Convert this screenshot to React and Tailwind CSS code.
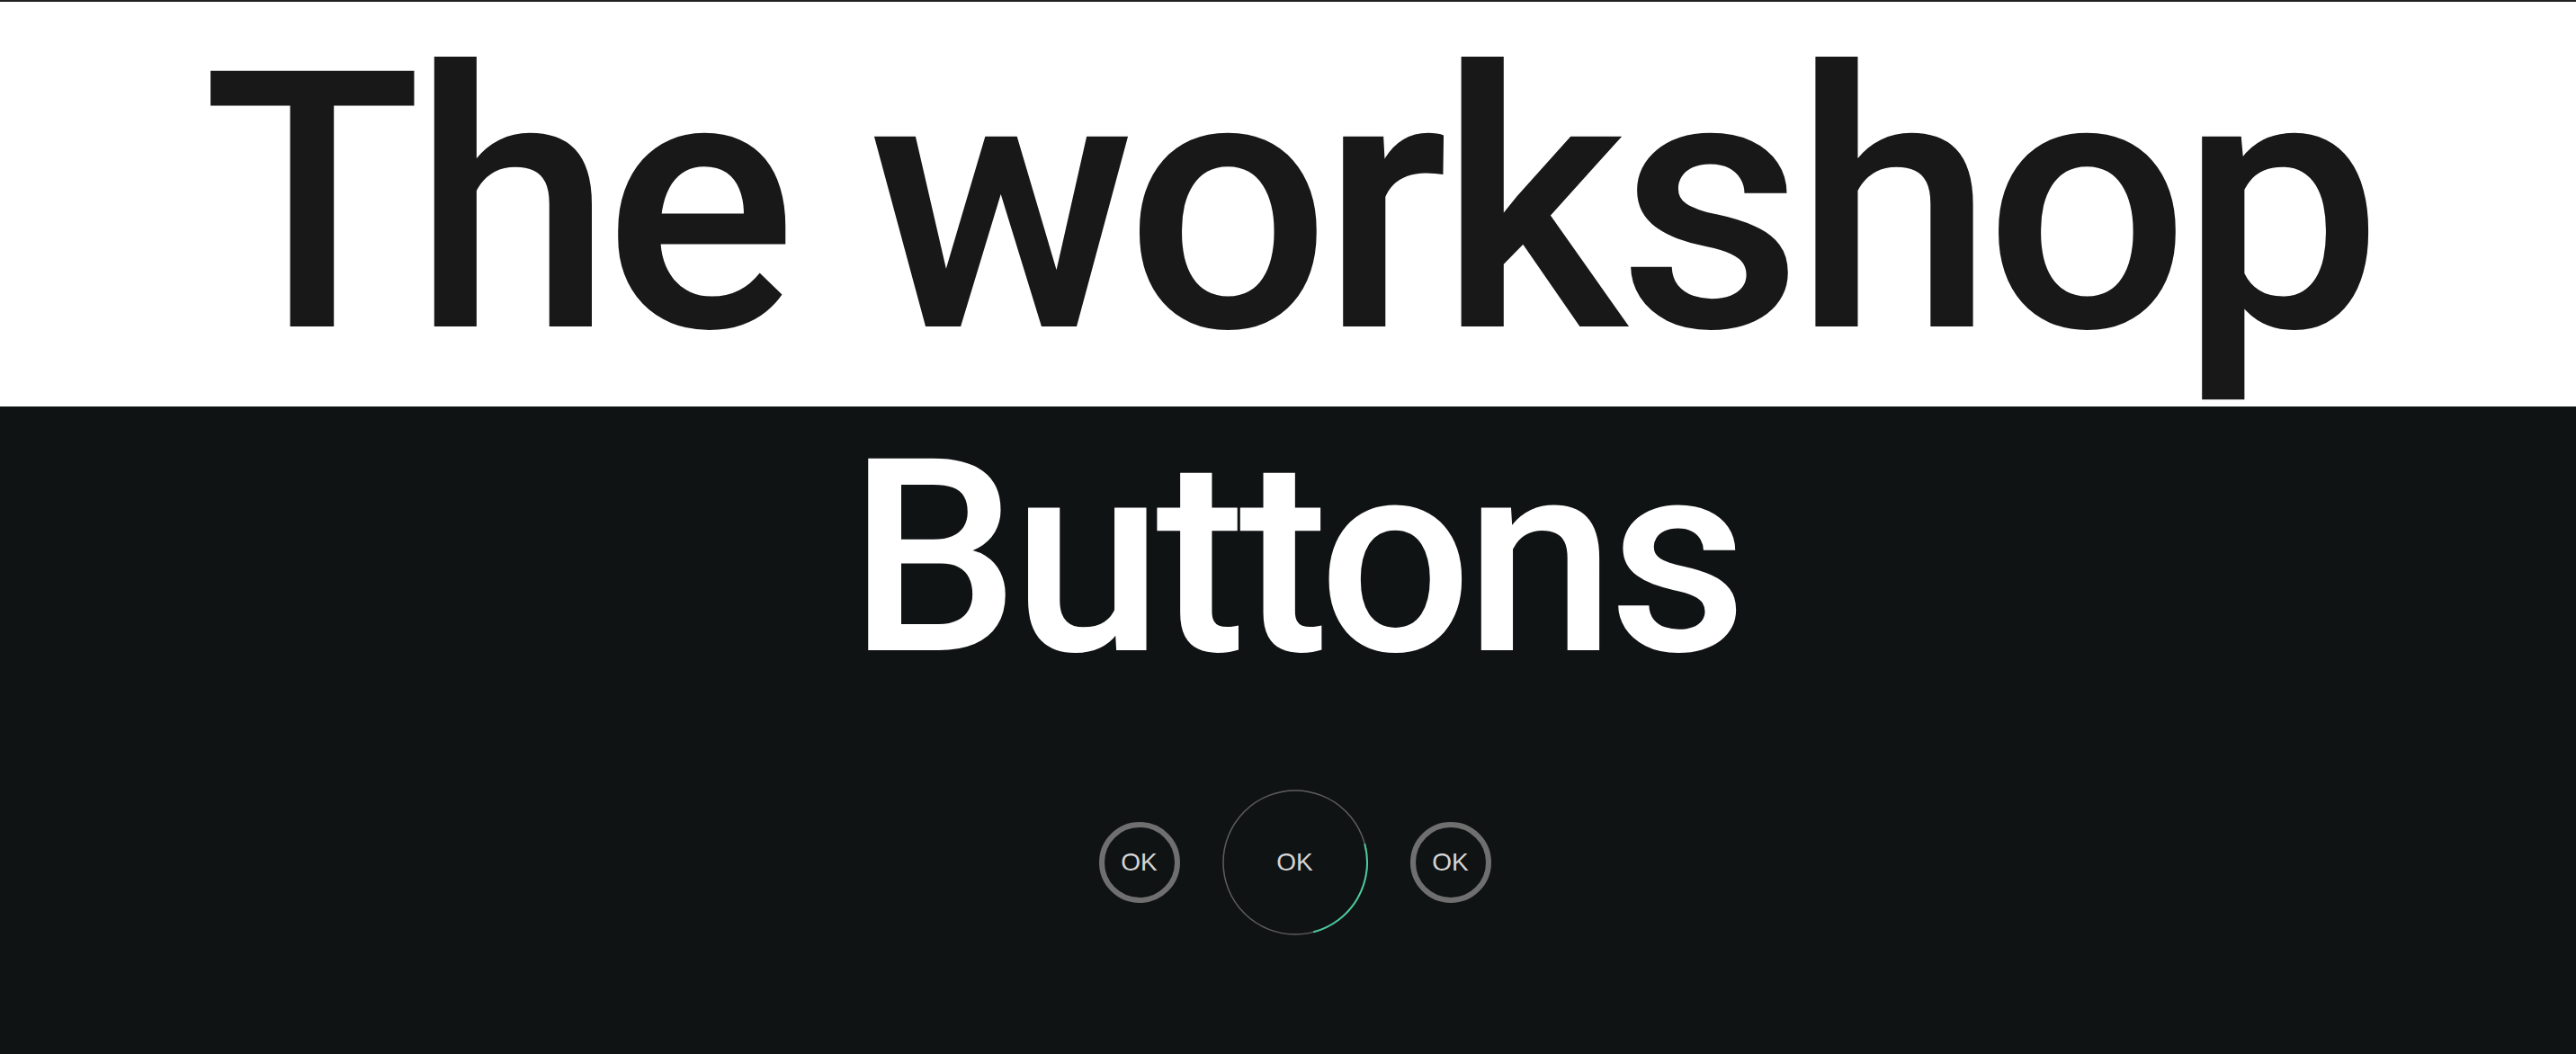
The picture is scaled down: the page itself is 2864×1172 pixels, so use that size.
export default function App() {
  const ok = 'text-[28px] leading-none text-[#d4d4d4] font-["Liberation_Sans",Arial,sans-serif]';
  return (
    <div className="min-h-[1172px] w-full flex flex-col bg-[#101314]">
      <header className="border-t-2 border-[#222222] bg-white pt-[1px] pb-[1px] flex justify-center">
        <h1 className="font-['Roboto',sans-serif] font-medium text-[400px] leading-[448px] tracking-tight text-[#181818] whitespace-nowrap">
          The workshop
        </h1>
      </header>

      <section className="flex-1 flex flex-col items-center pl-[15px] pt-[19px]">
        <h2 className="font-['Roboto',sans-serif] font-medium text-[300px] leading-none tracking-tight text-white whitespace-nowrap">
          Buttons
        </h2>

        <div className="mt-[107px] flex items-center gap-[47px]">
          <button className="w-[90px] h-[90px] rounded-full border-[6px] border-[#6f6f6f] flex items-center justify-center">
            <span className={ok}>OK</span>
          </button>

          <button className="relative w-[162px] h-[162px] rounded-full flex items-center justify-center">
            <svg className="absolute inset-0" width="162" height="162" viewBox="0 0 162 162">
              <circle cx="81" cy="81" r="80" fill="none" stroke="#5e5e5e" strokeWidth="1.5" />
              <circle
                cx="81"
                cy="81"
                r="80"
                fill="none"
                stroke="#4cc99a"
                strokeWidth="2"
                strokeDasharray="126 1000"
                transform="rotate(-15 81 81)"
              />
            </svg>
            <span className={ok}>OK</span>
          </button>

          <button className="w-[90px] h-[90px] rounded-full border-[6px] border-[#6f6f6f] flex items-center justify-center">
            <span className={ok}>OK</span>
          </button>
        </div>
      </section>
    </div>
  );
}
